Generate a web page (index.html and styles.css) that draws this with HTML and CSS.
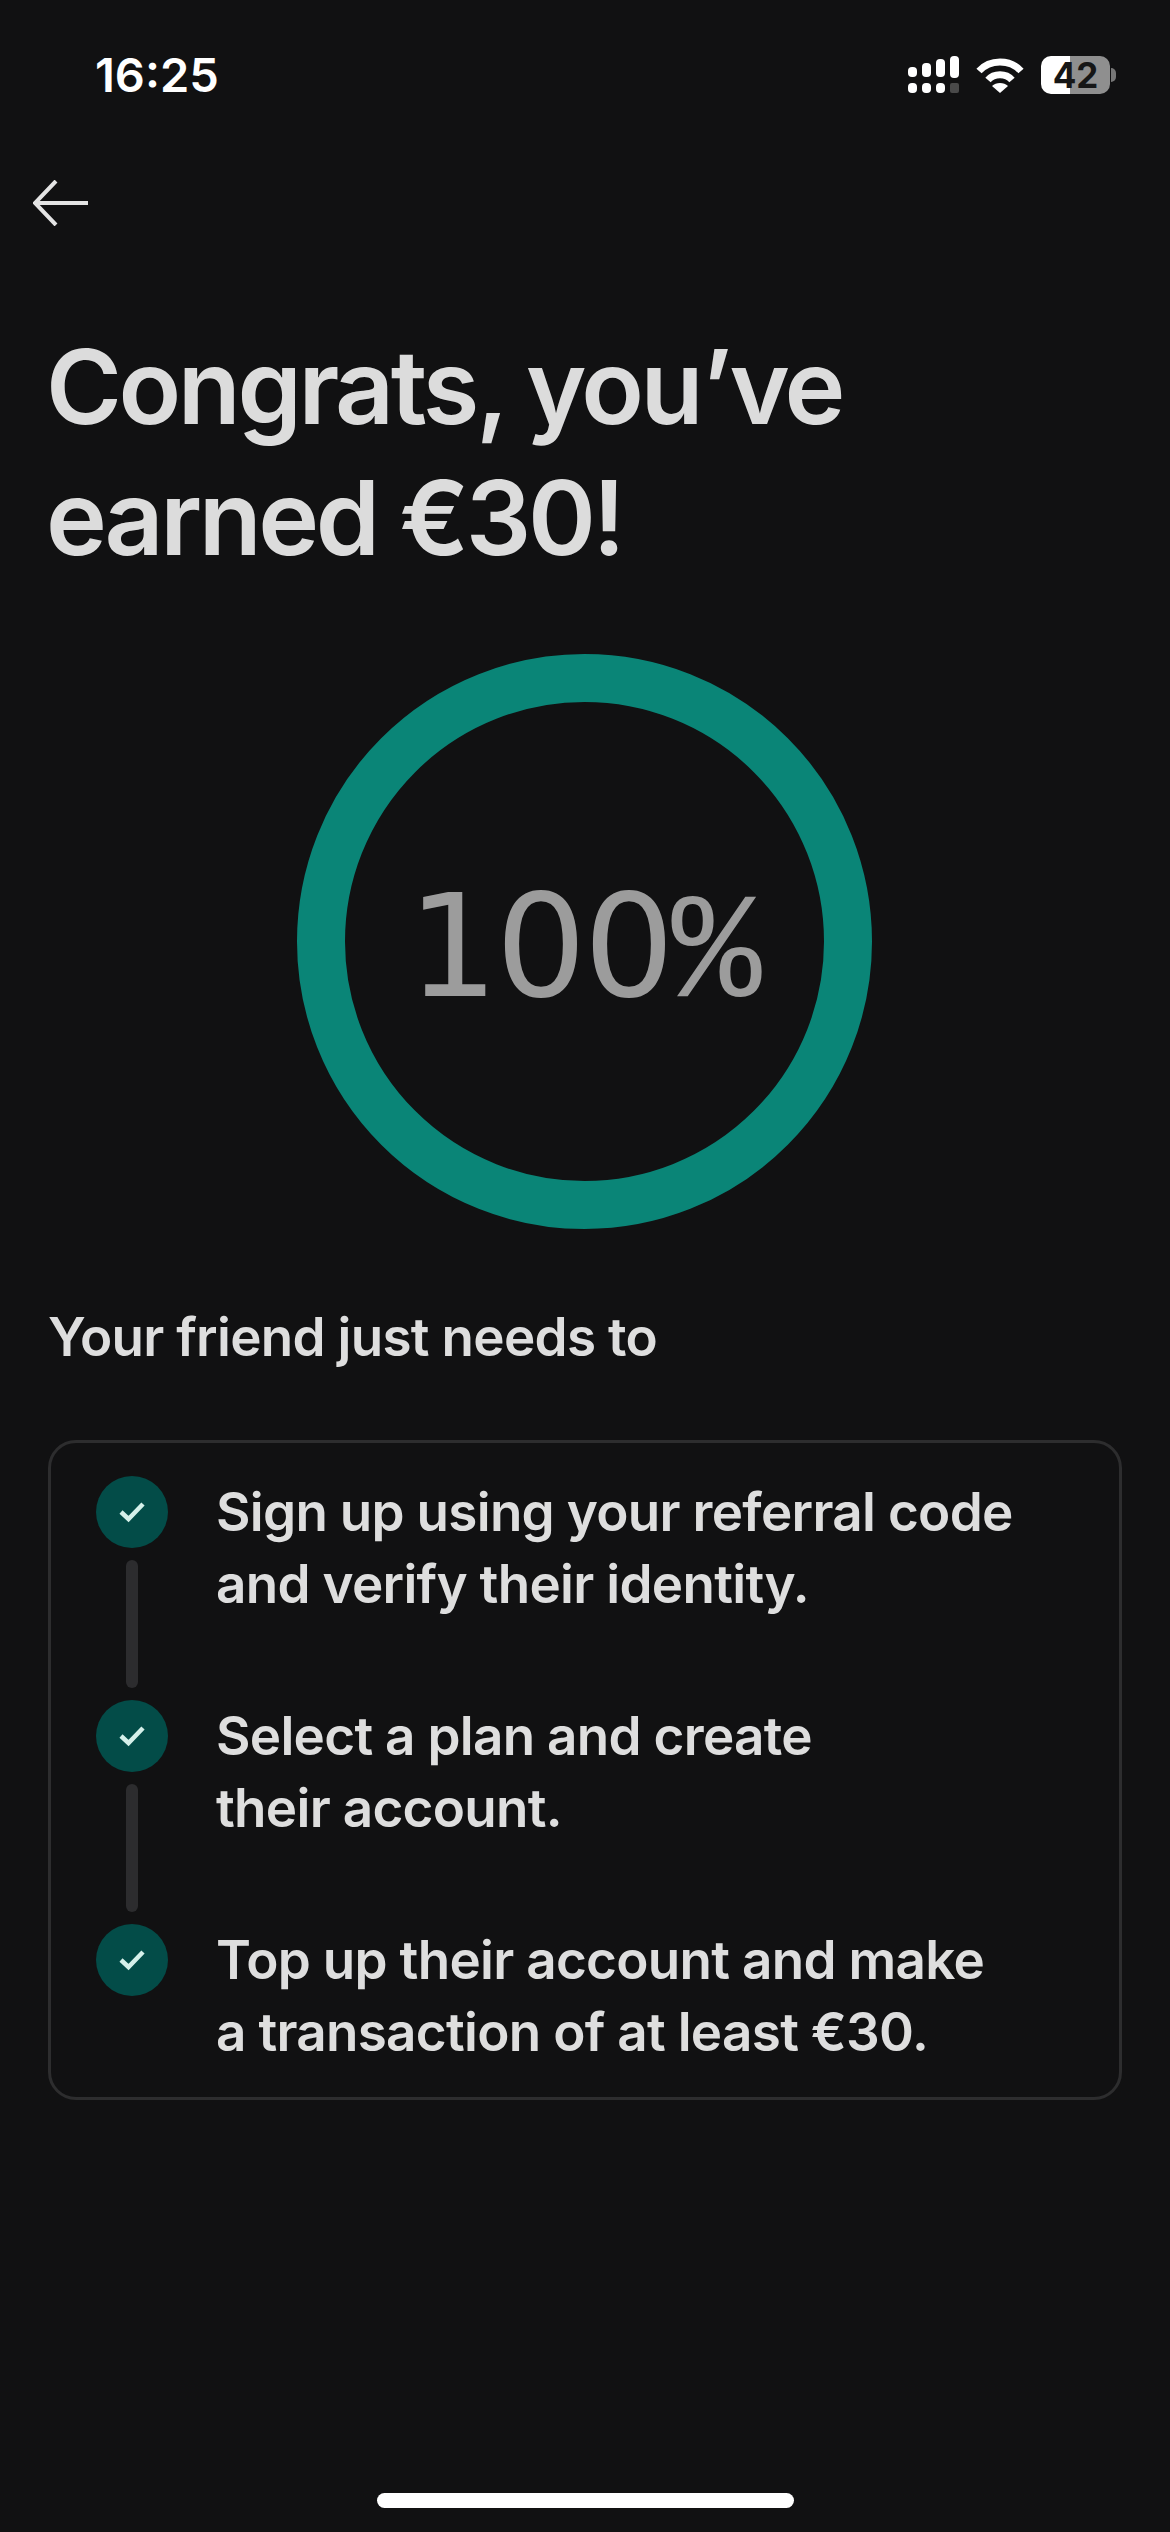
FILE: index.html
```html
<!DOCTYPE html>
<html lang="en">

<head>
  <meta charset="UTF-8">
  <title>Refer a friend</title>
  <link rel="stylesheet" href="styles.css">
</head>

<body>
  <div class="screen">
    <header class="status">
      <span class="time">16:25</span>
      <div class="status-icons">
        <svg class="signal" width="51" height="38" viewBox="0 0 51 38" fill="#fff">
          <rect x="0" y="11" width="9" height="10" rx="4" />
          <rect x="14" y="7" width="9" height="14" rx="4" />
          <rect x="28" y="3" width="9" height="18" rx="4" />
          <rect x="42" y="0" width="9" height="22" rx="4" />
          <rect x="0" y="27" width="9" height="10" rx="4" />
          <rect x="14" y="27" width="9" height="10" rx="4" />
          <rect x="28" y="27" width="9" height="10" rx="4" />
          <rect x="42" y="27" width="9" height="10" rx="2" fill="#4a4a4a" />
        </svg>
        <svg class="wifi" width="48" height="36" viewBox="0 0 48 36" fill="none" stroke="#fff" stroke-width="7">
          <path d="M3 14C14 2 34 2 45 14" />
          <path d="M12 23C18 16 30 16 36 23" />
          <path d="M16 29C20 25 28 25 32 29L24 36Z" fill="#fff" stroke="none" />
        </svg>
        <div class="battery">
          <span class="battery-level">42</span>
          <span class="battery-nub"></span>
        </div>
      </div>
    </header>

    <nav class="topbar">
      <svg width="56" height="46" viewBox="0 0 56 46" fill="none" stroke="#e4e4e4" stroke-width="4">
        <path d="M55 23H3" />
        <path d="M23 1L2 23L23 45" />
      </svg>
    </nav>

    <h1>Congrats, you’ve<br>earned €30!</h1>

    <div class="ring">
      <span class="ring-value">100<span class="ring-pct">%</span></span>
    </div>

    <p class="subtitle">Your friend just needs to</p>

    <section class="steps">
      <div class="step">
        <div class="step-marker">
          <div class="check">
            <svg width="26" height="22" viewBox="0 0 26 22" fill="none" stroke="#d5f0ea" stroke-width="4.5">
              <path d="M2 11L9.500 18L24 3" />
            </svg>
          </div>
          <div class="step-line"></div>
        </div>
        <p>Sign up using your referral code<br>and verify their identity.</p>
      </div>
      <div class="step">
        <div class="step-marker">
          <div class="check">
            <svg width="26" height="22" viewBox="0 0 26 22" fill="none" stroke="#d5f0ea" stroke-width="4.5">
              <path d="M2 11L9.500 18L24 3" />
            </svg>
          </div>
          <div class="step-line"></div>
        </div>
        <p>Select a plan and create<br>their account.</p>
      </div>
      <div class="step">
        <div class="step-marker">
          <div class="check">
            <svg width="26" height="22" viewBox="0 0 26 22" fill="none" stroke="#d5f0ea" stroke-width="4.5">
              <path d="M2 11L9.500 18L24 3" />
            </svg>
          </div>
        </div>
        <p>Top up their account and make<br>a transaction of at least €30.</p>
      </div>
    </section>

    <div class="home-indicator"></div>
  </div>
</body>

</html>
```

FILE: styles.css
```css
* {
  box-sizing: border-box;
}

html,
body {
  margin: 0;
  padding: 0;
  background: #111112;
}

.screen {
  width: 1170px;
  height: 2532px;
  display: flex;
  flex-direction: column;
  padding: 0 48px;
  font-family: Inter, "Liberation Sans", sans-serif;
  color: #dedede;
  overflow: hidden;
}

.status {
  height: 100px;
  margin: 0 6px 0 47px;
  display: flex;
  align-items: center;
  justify-content: space-between;
  padding-top: 50px;
}

.time {
  font-size: 47px;
  font-weight: 600;
  color: #fff;
  line-height: 50px;
}

.status-icons {
  display: flex;
  align-items: center;
  gap: 17px;
}

.signal,
.wifi {
  display: block;
}

.battery {
  position: relative;
  width: 69px;
  height: 38px;
  margin-right: 6px;
  border-radius: 10px;
  background: linear-gradient(90deg, #fff 42%, #8f8f8f 42%);
  display: flex;
  align-items: center;
  justify-content: center;
}

.battery-level {
  font-size: 35px;
  font-weight: 700;
  color: #161616;
  line-height: 38px;
}

.battery-nub {
  position: absolute;
  right: -6px;
  top: 12px;
  width: 5px;
  height: 14px;
  border-radius: 0 7px 7px 0;
  background: #777;
}

.topbar {
  margin: 80px 0 0 -15px;
  height: 46px;
}

.topbar svg {
  display: block;
}

h1 {
  margin: 95px 0 0 -2px;
  font-size: 103px;
  line-height: 131px;
  font-weight: 600;
  letter-spacing: -3.4px;
  color: #dcdcdc;
}

.ring {
  width: 575px;
  height: 575px;
  margin: 71px 0 0 249px;
  border: 48px solid #0a8577;
  border-radius: 50%;
  display: flex;
  align-items: center;
  justify-content: center;
}

.ring-value {
  font-family: "DejaVu Sans", sans-serif;
  font-size: 143px;
  line-height: 1;
  color: #9c9c9c;
  letter-spacing: -3px;
  white-space: nowrap;
  padding-top: 22px;
}

.ring-pct {
  font-family: "Liberation Mono", monospace;
  font-size: 150px;
  letter-spacing: 0;
}

.subtitle {
  margin: 73px 0 0;
  font-size: 53px;
  line-height: 70px;
  font-weight: 600;
  letter-spacing: -0.7px;
  color: #dedede;
}

.steps {
  margin-top: 68px;
  border: 3px solid #2d2d2e;
  border-radius: 28px;
  padding: 33px 45px 29px;
  display: flex;
  flex-direction: column;
}

.step {
  display: flex;
  gap: 48px;
  flex-shrink: 0;
  min-height: 224px;
}

.step:last-child {
  min-height: 0;
}

.step-marker {
  width: 72px;
  display: flex;
  flex-direction: column;
  align-items: center;
  flex-shrink: 0;
}

.check {
  width: 72px;
  height: 72px;
  border-radius: 50%;
  background: #034c48;
  display: flex;
  align-items: center;
  justify-content: center;
}

.check svg {
  display: block;
}

.step-line {
  width: 12px;
  height: 128px;
  margin-top: 12px;
  border-radius: 6px;
  background: #2c2c2e;
}

.step p {
  margin: 0;
  font-size: 53px;
  line-height: 72px;
  font-weight: 600;
  letter-spacing: -0.7px;
  color: #dedede;
}

.home-indicator {
  width: 417px;
  height: 15px;
  margin: auto auto 24px;
  border-radius: 8px;
  background: #fff;
}
```
